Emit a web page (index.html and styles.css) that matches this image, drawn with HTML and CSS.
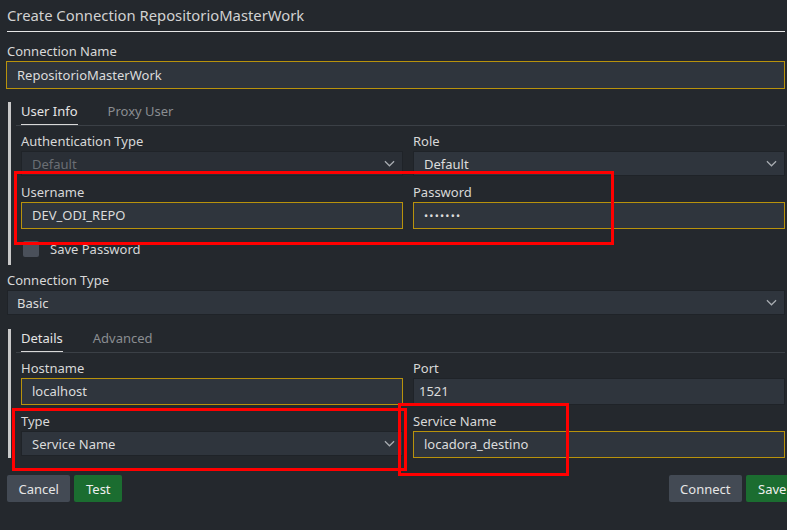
FILE: index.html
```html
<!DOCTYPE html>
<html>
<head>
<meta charset="utf-8">
<link rel="stylesheet" href="styles.css">
</head>
<body>
<div class="dialog">
  <div class="title">Create Connection RepositorioMasterWork</div>

  <div class="field conn-name">
    <label class="lbl">Connection Name</label>
    <div class="input focus">RepositorioMasterWork</div>
  </div>

  <div class="section sec1">
    <div class="tabs">
      <span class="tab active">User Info</span>
      <span class="tab">Proxy User</span>
    </div>
    <div class="grid">
      <div class="field">
        <label class="lbl">Authentication Type</label>
        <div class="select disabled"><span>Default</span><svg class="chev" viewBox="0 0 12 7"><path d="M1 1l5 5 5-5"/></svg></div>
      </div>
      <div class="field">
        <label class="lbl">Role</label>
        <div class="select"><span>Default</span><svg class="chev" viewBox="0 0 12 7"><path d="M1 1l5 5 5-5"/></svg></div>
      </div>
      <div class="field">
        <label class="lbl">Username</label>
        <div class="input focus">DEV_ODI_REPO</div>
      </div>
      <div class="field">
        <label class="lbl">Password</label>
        <div class="input focus pw">•••••••</div>
      </div>
    </div>
    <div class="check">
      <span class="box"></span>
      <span>Save Password</span>
    </div>
    <div class="hl hl1"></div>
  </div>

  <div class="field ctype">
    <label class="lbl top">Connection Type</label>
    <div class="select wide"><span>Basic</span><svg class="chev" viewBox="0 0 12 7"><path d="M1 1l5 5 5-5"/></svg></div>
  </div>

  <div class="section sec2">
    <div class="tabs">
      <span class="tab active">Details</span>
      <span class="tab">Advanced</span>
    </div>
    <div class="grid">
      <div class="field">
        <label class="lbl">Hostname</label>
        <div class="input focus">localhost</div>
      </div>
      <div class="field">
        <label class="lbl">Port</label>
        <div class="input port">1521</div>
      </div>
      <div class="field">
        <label class="lbl">Type</label>
        <div class="select"><span>Service Name</span><svg class="chev" viewBox="0 0 12 7"><path d="M1 1l5 5 5-5"/></svg></div>
      </div>
      <div class="field">
        <label class="lbl">Service Name</label>
        <div class="input focus">locadora_destino</div>
      </div>
    </div>
    <div class="hl hl2"></div>
    <div class="hl hl3"></div>
  </div>

  <div class="buttons">
    <div class="left">
      <button class="btn grey">Cancel</button>
      <button class="btn green">Test</button>
    </div>
    <div class="right">
      <button class="btn grey">Connect</button>
      <button class="btn green save">Save</button>
    </div>
  </div>
</div>
</body>
</html>
```

FILE: styles.css
```css
* { box-sizing: border-box; }
html, body {
  margin: 0;
  padding: 0;
  background: #24282d;
  overflow: hidden;
}
body {
  font-family: "Noto Sans", "Open Sans", sans-serif;
  font-size: 13px;
  color: #d6d6d6;
  width: 787px;
  height: 530px;
}
.dialog {
  padding: 4px 2px 0 7px;
}
.title {
  font-size: 14.8px;
  color: #d2d2d2;
  line-height: 22px;
  padding-bottom: 5px;
  border-bottom: 1px solid #e6e6e6;
}
.lbl {
  display: block;
  line-height: 18px;
  margin-bottom: 1px;
  color: #d8d8d8;
}
.conn-name {
  margin-top: 10px;
}
.input, .select {
  height: 27px;
  background: #2f353d;
  border: 1px solid #1f2328;
  color: #dcdcdc;
  line-height: 25px;
  padding: 0 10px;
  white-space: nowrap;
}
.conn-name .input {
  margin-left: -1px;
  height: 28px;
  line-height: 26px;
  border-color: #b8920c;
  border-right-color: #2f353d;
}
.input.focus { border-color: #b8920c; }
.input.pw { font-size: 11px; letter-spacing: 1.2px; padding-left: 10px; }
.input.port { padding-left: 5px; }
.select {
  height: 25px;
  line-height: 23px;
  display: flex;
  justify-content: space-between;
  align-items: center;
}
.select span { padding-top: 2px; }
.select.disabled { background: #2a2f36; color: #6a6e74; }
.select.wide { padding-left: 9px; }
.chev {
  width: 11px;
  height: 7px;
  fill: none;
  stroke: #a9adb2;
  stroke-width: 1.3;
  margin-right: -3px;
}
.section {
  position: relative;
  margin-left: 1px;
  border-left: 3px solid #c9c9c9;
  padding-left: 10px;
}
.sec1 {
  margin-top: 13px;
  padding-bottom: 8px;
}
.tabs {
  margin-left: -5px;
  padding-left: 5px;
  border-bottom: 1px solid #3b4046;
  display: flex;
  gap: 30px;
  line-height: 18px;
}
.tab {
  color: #8a8d91;
  padding-bottom: 4px;
}
.tab.active {
  color: #e4e4e4;
  border-bottom: 1px solid #d8d8d8;
}
.grid {
  margin-top: 6px;
  display: grid;
  grid-template-columns: 382px 1fr;
  column-gap: 10px;
  row-gap: 7px;
}
.check {
  display: flex;
  align-items: center;
  gap: 11px;
  margin-top: 12px;
  margin-left: 2px;
  line-height: 16px;
}
.box {
  width: 16px;
  height: 16px;
  background: #4a505a;
  border-radius: 2px;
}
.ctype { margin-top: 6px; }
.sec2 {
  margin-top: 14px;
}
.buttons {
  margin-top: 17px;
  display: flex;
  justify-content: space-between;
  margin-right: -2px;
}
.left, .right { display: flex; gap: 4px; }
.btn {
  font-family: inherit;
  font-size: 13px;
  height: 27px;
  border: 0;
  border-radius: 2px;
  padding: 0 11.5px;
  color: #e6e6e6;
}
.btn.grey { background: #434a54; }
.btn.green { background: #1b6d30; color: #f0f0f0; }
.btn.save { width: 41px; padding: 0 0 0 12px; text-align: left; border-radius: 2px 0 0 2px; }
.hl {
  position: absolute;
  border: 3px solid #ff0000;
  pointer-events: none;
}
.hl1 { left: 3px; top: 69px; width: 600px; height: 74px; }
.hl2 { left: 1px; top: 79px; width: 395px; height: 63px; }
.hl3 { left: 387px; top: 74px; width: 171px; height: 73px; }
```
